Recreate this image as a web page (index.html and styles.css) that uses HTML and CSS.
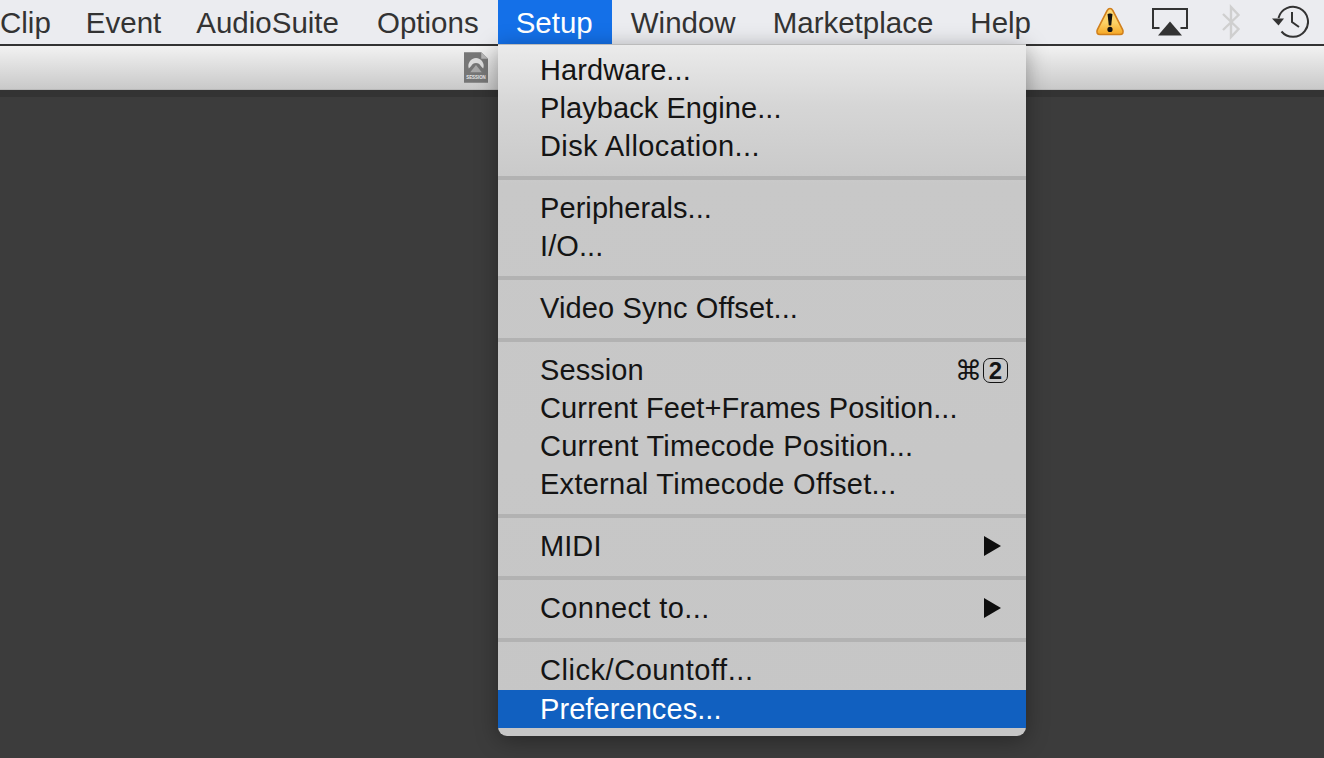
FILE: index.html
```html
<!DOCTYPE html>
<html lang="en">
<head>
<meta charset="utf-8">
<title>Setup menu</title>
<link rel="stylesheet" href="styles.css">
</head>
<body>
<header class="menubar">
  <nav class="menus">
    <span class="menu-title tight">Clip</span>
    <span class="menu-title tight-end">Event</span>
    <span class="menu-title loose-end">AudioSuite</span>
    <span class="menu-title before-active">Options</span>
    <span class="menu-title active">Setup</span>
    <span class="menu-title">Window</span>
    <span class="menu-title">Marketplace</span>
    <span class="menu-title">Help</span>
  </nav>
  <div class="status">
    <svg class="ico-warn" width="30" height="32" viewBox="0 0 30 32">
      <defs><linearGradient id="wg" x1="0" y1="0" x2="0" y2="1"><stop offset="0" stop-color="#fdd873"/><stop offset="0.55" stop-color="#fbd266"/><stop offset="1" stop-color="#f6a623"/></linearGradient></defs>
      <path d="M15 2.5 C16.4 2.5 17.2 3.4 17.9 4.6 L27.6 23.6 C28.9 26.2 27.8 28.5 25 28.5 L5 28.5 C2.2 28.5 1.1 26.2 2.4 23.6 L12.1 4.6 C12.8 3.4 13.6 2.5 15 2.5 Z" fill="url(#wg)" stroke="#d07f1c" stroke-width="1.6"/>
      <path d="M12.6 8.5 C12.6 7 17.4 7 17.4 8.5 L16.2 19.5 H13.8 Z" fill="#111"/>
      <circle cx="15" cy="23.4" r="2.6" fill="#111"/>
    </svg>
    <svg class="ico-air" width="38" height="30" viewBox="0 0 38 30">
      <path d="M8.5 21 H2 V2 H36 V21 H29.5" fill="none" stroke="#333" stroke-width="2"/>
      <path d="M19 14.5 L31 28.5 H7 Z" fill="#333"/>
    </svg>
    <svg class="ico-bt" width="20" height="36" viewBox="0 0 20 36">
      <path d="M2 10 L17.5 25 L10 33 V3 L17.5 11 L2 26" fill="none" stroke="#cfcfcf" stroke-width="2.4"/>
    </svg>
    <svg class="ico-tm" width="38" height="34" viewBox="0 0 38 34">
      <path d="M7.5 13 A15 15 0 1 1 10.5 26.5" fill="none" stroke="#333" stroke-width="2"/>
      <path d="M1 13.5 H13 L7.5 20.5 Z" fill="#333"/>
      <path d="M21 7 V17 L28 22" fill="none" stroke="#333" stroke-width="2"/>
    </svg>
  </div>
</header>
<section class="toolbar">
  <svg class="session" width="24" height="31" viewBox="0 0 25 32">
    <path d="M0 0 H18 L25 7 V32 H0 Z" fill="#767676"/>
    <path d="M18 0 L25 7 H18 Z" fill="#b5b5b5"/>
    <path d="M5 17 A8 8 0 1 1 20 17 L17.5 14.5 A5.5 5.5 0 0 0 7.5 14.5 Z" fill="#dcdcdc"/>
    <path d="M6.5 21 L12.5 13.5 L18.5 21 Z" fill="#a8a8a8"/>
    <text class="session-label" x="12.5" y="28.5" text-anchor="middle">SESSION</text>
  </svg>
</section>
<main class="workspace"></main>

<div class="dropdown">
  <ul class="group">
    <li class="item">Hardware...</li>
    <li class="item">Playback Engine...</li>
    <li class="item wide-b">Disk Allocation...</li>
  </ul>
  <hr class="sep">
  <ul class="group">
    <li class="item">Peripherals...</li>
    <li class="item">I/O...</li>
  </ul>
  <hr class="sep">
  <ul class="group">
    <li class="item wide-a">Video Sync Offset...</li>
  </ul>
  <hr class="sep">
  <ul class="group">
    <li class="item">Session
      <span class="shortcut"><span class="cmd">⌘</span><span class="key">2</span></span>
    </li>
    <li class="item wide-a">Current Feet+Frames Position...</li>
    <li class="item wide-d">Current Timecode Position...</li>
    <li class="item wide-d">External Timecode Offset...</li>
  </ul>
  <hr class="sep">
  <ul class="group">
    <li class="item">MIDI <span class="arrow"></span></li>
  </ul>
  <hr class="sep">
  <ul class="group">
    <li class="item wide-b">Connect to... <span class="arrow"></span></li>
  </ul>
  <hr class="sep">
  <ul class="group">
    <li class="item wide-c">Click/Countoff...</li>
    <li class="item selected">Preferences...</li>
  </ul>
</div>
</body>
</html>
```
FILE: styles.css
```css
* { box-sizing: border-box; }
html, body { margin: 0; height: 100%; overflow: hidden; }
body {
  display: flex;
  flex-direction: column;
  width: 1324px;
  height: 758px;
  background: #3c3c3c;
  font-family: "Liberation Sans", Arial, sans-serif;
  position: relative;
}
.menubar {
  height: 46px;
  flex: none;
  display: flex;
  justify-content: space-between;
  background: #ebecf0;
  border-bottom: 2px solid #333;
  color: #333;
  font-size: 29.5px;
}
.menus { display: flex; }
.menu-title {
  height: 44px;
  line-height: 45px;
  padding: 0 18.5px;
  white-space: nowrap;
}
.menu-title.tight { padding: 0 16.5px 0 0; }
.menu-title.tight-end { padding-right: 16.5px; }
.menu-title.loose-end { padding-right: 19.5px; }
.menu-title.before-active { padding-right: 19.5px; }
.menu-title.active { padding: 0 19.5px 0 17.5px; background: #1470e8; color: #fff; }
.status {
  display: flex;
  align-items: center;
  height: 44px;
  width: 229px;
}
.ico-warn { flex: none; }
.ico-air { margin-left: 26px; flex: none; }
.ico-bt { margin-left: 32px; flex: none; }
.ico-tm { margin-left: 30px; flex: none; }
.toolbar {
  height: 44px;
  flex: none;
  display: flex;
  padding: 6px 0 0 464px;
  background: linear-gradient(#f2f2f2, #c9c9c9);
  border-bottom: 1px solid #b9b9b9;
}
.session { flex: none; }
.session-label { font-size: 4.6px; font-weight: 700; fill: #e8e8e8; font-family: "Liberation Sans", sans-serif; }
.workspace {
  flex: 1;
  background: #3c3c3c;
  border-top: 7px solid #333;
}
.dropdown {
  position: absolute;
  left: 498px;
  top: 44px;
  width: 528px;
  height: 692px;
  padding-top: 6px;
  border-top: 1px solid #bbb;
  border-radius: 0 0 9px 9px;
  background: linear-gradient(#ebebeb 0, #d6d6d6 60px, #c8c8c8 140px, #c6c6c6 100%);
  box-shadow: 0 4px 22px rgba(0, 0, 0, 0.35);
  color: #141414;
  font-size: 29px;
}
.group { list-style: none; margin: 0; padding: 0; }
.item {
  position: relative;
  display: flex;
  justify-content: space-between;
  align-items: center;
  height: 38px;
  padding: 1px 18px 0 42px;
  letter-spacing: 0.08px;
  white-space: nowrap;
}
.item.wide-a { letter-spacing: 0.14px; }
.item.wide-d { letter-spacing: 0.27px; }
.item.wide-b { letter-spacing: 0.4px; }
.item.wide-c { letter-spacing: 0.55px; }
.item.selected { background: #1160c0; color: #fff; margin-top: 1px; margin-bottom: -1px; }
.sep {
  height: 4px;
  margin: 11px 0 9px;
  border: 0;
  background: #b2b2b2;
}
.shortcut { display: flex; align-items: center; gap: 1px; }
.cmd { font-family: "DejaVu Sans", sans-serif; font-size: 27px; line-height: 1; }
.key {
  display: flex;
  align-items: center;
  justify-content: center;
  width: 25px;
  height: 25px;
  border: 1.5px solid #141414;
  border-radius: 7px;
  font-size: 24px;
  font-weight: 700;
}
.arrow {
  width: 0;
  height: 0;
  margin-right: 7px;
  margin-bottom: 2px;
  border-left: 17px solid #0e0e0e;
  border-top: 10px solid transparent;
  border-bottom: 10px solid transparent;
}
```
